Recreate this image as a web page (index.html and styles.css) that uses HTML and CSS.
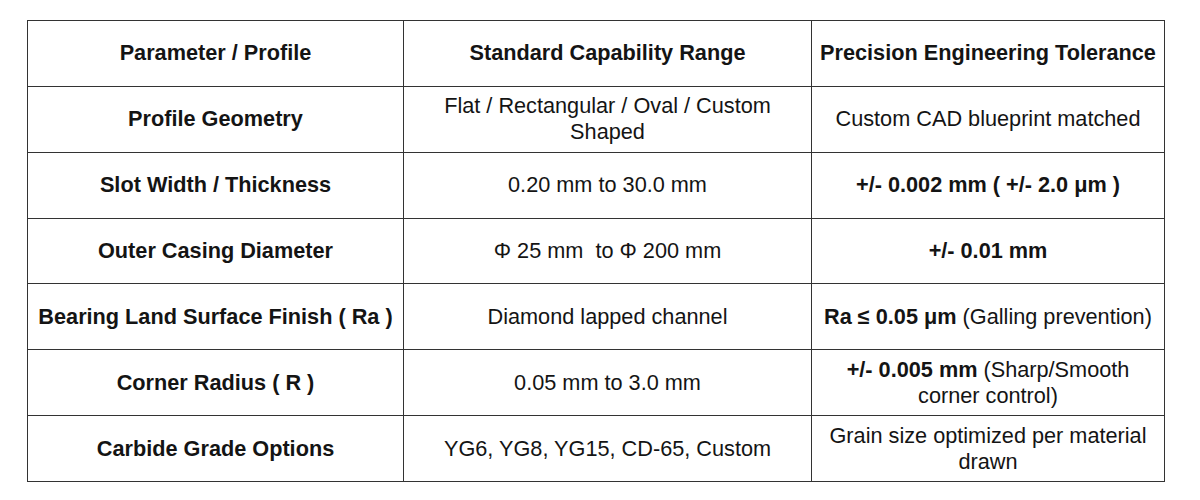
FILE: index.html
```html
<!DOCTYPE html>
<html>
<head>
<meta charset="utf-8">
<link rel="stylesheet" href="styles.css">
</head>
<body>
<table class="spec">
  <colgroup>
    <col class="c1"><col class="c2"><col class="c3">
  </colgroup>
  <thead>
    <tr>
      <th>Parameter / Profile</th>
      <th>Standard Capability Range</th>
      <th>Precision Engineering Tolerance</th>
    </tr>
  </thead>
  <tbody>
    <tr>
      <td class="label">Profile Geometry</td>
      <td>Flat / Rectangular / Oval / Custom Shaped</td>
      <td>Custom CAD blueprint matched</td>
    </tr>
    <tr>
      <td class="label">Slot Width / Thickness</td>
      <td>0.20 mm to 30.0 mm</td>
      <td><b>+/- 0.002 mm ( +/- 2.0 μm )</b></td>
    </tr>
    <tr>
      <td class="label">Outer Casing Diameter</td>
      <td>Φ 25 mm&nbsp; to Φ 200 mm</td>
      <td><b>+/- 0.01 mm</b></td>
    </tr>
    <tr>
      <td class="label">Bearing Land Surface Finish ( Ra )</td>
      <td>Diamond lapped channel</td>
      <td><b>Ra ≤ 0.05 μm</b> (Galling prevention)</td>
    </tr>
    <tr>
      <td class="label">Corner Radius ( R )</td>
      <td>0.05 mm to 3.0 mm</td>
      <td><b>+/- 0.005 mm</b> (Sharp/Smooth corner control)</td>
    </tr>
    <tr>
      <td class="label">Carbide Grade Options</td>
      <td>YG6, YG8, YG15, CD-65, Custom</td>
      <td>Grain size optimized per material drawn</td>
    </tr>
  </tbody>
</table>
</body>
</html>
```
FILE: styles.css
```css
html, body {
  background: #ffffff;
}
body {
  margin: 20px 0 0 27px;
  font-family: "Liberation Sans", Arial, sans-serif;
  color: #141414;
}
.spec {
  border-collapse: collapse;
  width: 1137px;
  table-layout: fixed;
  font-size: 21.7px;
  line-height: 26px;
}
.c1 { width: 376px; }
.c2 { width: 408px; }
.c3 { width: 353px; }
.spec th, .spec td {
  border: 1px solid #333333;
  height: 65.86px;
  padding: 0 4px;
  text-align: center;
  vertical-align: middle;
  box-sizing: border-box;
}
.spec th, .spec td.label {
  font-weight: bold;
}
.spec b {
  font-weight: bold;
}
```
